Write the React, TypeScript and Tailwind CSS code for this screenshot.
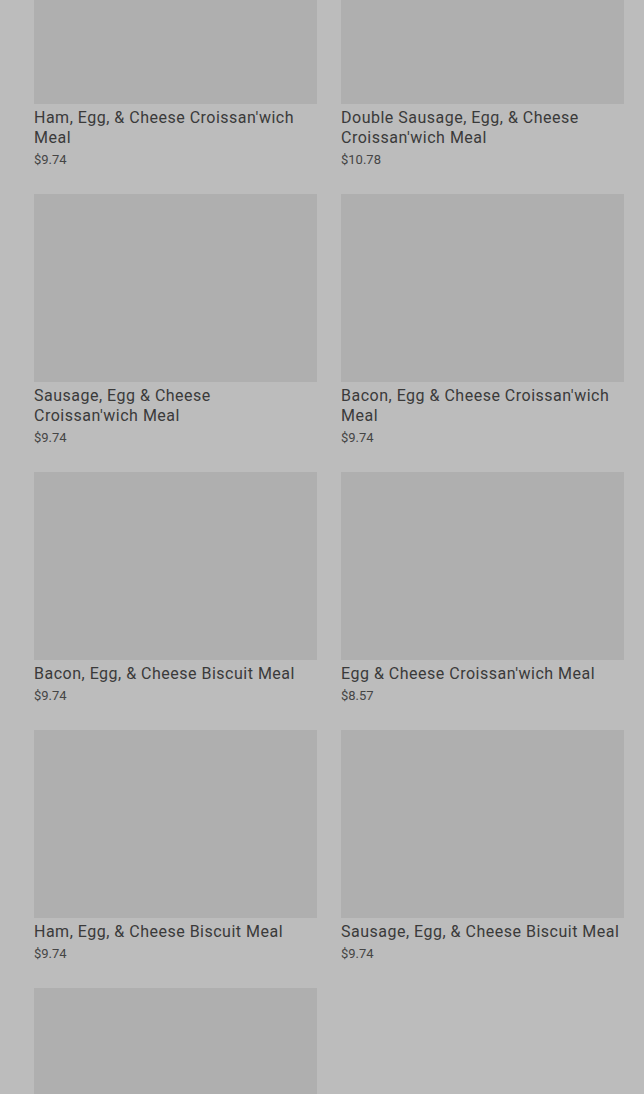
const ITEMS = [
  { name: "Ham, Egg, & Cheese Croissan'wich Meal", price: "$9.74" },
  { name: "Double Sausage, Egg, & Cheese Croissan'wich Meal", price: "$10.78" },
  { name: "Sausage, Egg & Cheese Croissan'wich Meal", price: "$9.74" },
  { name: "Bacon, Egg & Cheese Croissan'wich Meal", price: "$9.74" },
  { name: "Bacon, Egg, & Cheese Biscuit Meal", price: "$9.74" },
  { name: "Egg & Cheese Croissan'wich Meal", price: "$8.57" },
  { name: "Ham, Egg, & Cheese Biscuit Meal", price: "$9.74" },
  { name: "Sausage, Egg, & Cheese Biscuit Meal", price: "$9.74" },
];

function MenuCard({ name, price }: { name?: string; price?: string }) {
  return (
    <div className="flex flex-col">
      <div className="h-[188px] bg-[#afafaf]" />
      {name && (
        <p className="mt-[4px] text-[16px] leading-[20px] font-normal tracking-[0.5px] text-[#3a3a3a]">{name}</p>
      )}
      {price && <p className="mt-[3px] text-[13px] leading-[18px] text-[#454545]">{price}</p>}
    </div>
  );
}

export default function App() {
  return (
    <div
      className="h-[1094px] overflow-hidden bg-[#bcbcbc] pl-[34px] pr-[20px]"
      style={{ fontFamily: "Roboto, 'Noto Sans', sans-serif" }}
    >
      <div className="-mt-[84px] grid grid-cols-2 gap-x-[24px] gap-y-[25px]">
        {ITEMS.map((it) => (
          <MenuCard key={it.name} {...it} />
        ))}
        {/* next card, only its photo is in view */}
        <MenuCard />
      </div>
    </div>
  );
}
